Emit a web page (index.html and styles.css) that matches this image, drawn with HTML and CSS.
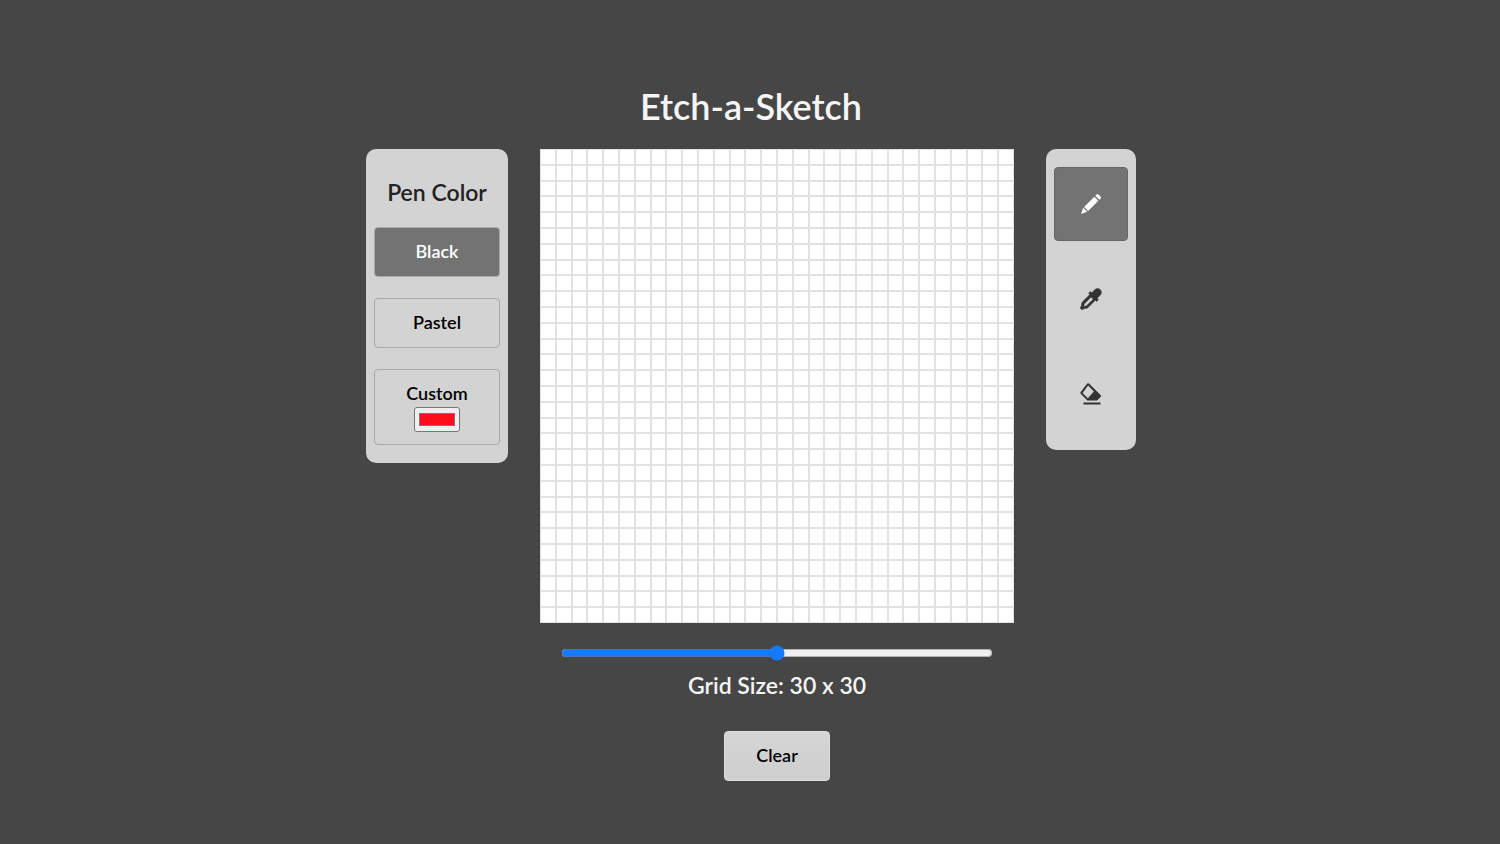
FILE: index.html
```html
<!DOCTYPE html>
<html lang="en">
<head>
<meta charset="utf-8">
<title>Etch-a-Sketch</title>
<link rel="stylesheet" href="styles.css">
</head>
<body>
<h1 class="title">Etch-a-Sketch</h1>
<main class="workspace">
  <section class="panel pens">
    <h2 class="panel-title">Pen Color</h2>
    <button class="pen selected" type="button">Black</button>
    <button class="pen" type="button">Pastel</button>
    <div class="pen custom">
      <label for="pen-color">Custom</label>
      <input class="swatch" id="pen-color" type="color" value="#ff0d1b">
    </div>
  </section>
  <section class="board">
    <div class="grid" id="grid"></div>
    <input class="size" id="size" type="range" min="0" max="60" value="30" aria-labelledby="size-label">
    <label class="size-label" id="size-label" for="size">Grid Size: 30 x 30</label>
    <button class="clear" id="clear" type="button">Clear</button>
  </section>
  <section class="panel tools">
    <button class="tool selected" type="button" aria-label="Pen">
      <svg class="icon" viewBox="0 0 24 24"><path d="M2 22l2.200-6.200 4 4zM5.100 14.900L15.300 4.700l4 4L9.100 18.900zM16.300 3.700l1.300-1.300q.9-.9 1.800 0l2.200 2.200q.9.900 0 1.800l-1.300 1.300z"/></svg>
    </button>
    <button class="tool" type="button" aria-label="Eyedropper">
      <svg class="icon" viewBox="0 0 24 24"><path fill-rule="evenodd" stroke="currentColor" stroke-width=".5" stroke-linejoin="round" d="M21.300 2.700c-1.600-1.600-4.100-1.400-5.600.1l-2.900 2.900-1.400-1.300-1.900 1.900 1.300 1.300-7.200 7.200c-.6.600-.8 1.200-.9 2L2.300 18.900 1.200 21.200l1.600 1.600 2.300-1.100 2-.4c.8-.1 1.400-.3 2-.9l7.200-7.200 1.300 1.300 1.900-1.900-1.300-1.400L21.200 8.300C22.700 6.800 22.900 4.300 21.300 2.700zM7.600 18.700c-.3.300-.7.400-1.200.5l-1.600.3.300-1.700c.1-.5.200-.9.500-1.200l6.500-6.500 2.100 2.100z"/></svg>
    </button>
    <button class="tool" type="button" aria-label="Eraser">
      <svg class="icon" viewBox="0 0 24 24"><path fill-rule="evenodd" d="M8.200 1.600q.9-.9 1.800 0L21.800 13.200q.7.800 0 1.600L18 18.500H8.400L1.700 11.800q-.9-.9 0-1.800zM9.100 3.600L3.600 10.900l5.300 5.300 6-6.800zM4.500 20.600h17v1.900h-17z"/></svg>
    </button>
  </section>
</main>
<script src="script.js"></script>
</body>
</html>
```
FILE: styles.css
```css
* { box-sizing: border-box; }

body {
  margin: 0;
  min-height: 100vh;
  padding: 84px 0 60px 2px;
  background: #464646;
  color: #f5f5f5;
  font-family: Lato, "Open Sans", sans-serif;
  font-weight: 600;
}

button { font: inherit; }

.title {
  margin: 0 0 21px;
  font-size: 36px;
  line-height: 44px;
  font-weight: 600;
  text-align: center;
}

.workspace {
  display: flex;
  justify-content: center;
  align-items: flex-start;
  gap: 32px;
}

.panel {
  display: flex;
  flex-direction: column;
  border-radius: 10px;
  background: #d3d3d3;
}

.pens {
  width: 142px;
  gap: 21px;
  padding: 27px 8px 18px;
}

.panel-title {
  margin: 0 0 -2px;
  font-size: 23px;
  line-height: 32px;
  font-weight: 600;
  text-align: center;
  color: #222;
}

.pen {
  height: 50px;
  border: 1px solid #a9a9a9;
  border-radius: 4px;
  padding: 0 0 3px;
  background: #d3d3d3;
  color: #000;
  font-size: 18px;
  line-height: 24px;
  text-align: center;
}

.selected {
  background: #737373;
  color: #fff;
}

.custom {
  display: flex;
  flex-direction: column;
  align-items: center;
  gap: 2px;
  height: auto;
  padding: 11px 0 12px;
}

.swatch {
  width: 46px;
  height: 25px;
  border: 1px solid #767676;
  border-radius: 3px;
  padding: 1px 2px;
  background: #efefef;
}

.board {
  display: flex;
  flex-direction: column;
  align-items: center;
  width: 474px;
}

.grid {
  display: grid;
  width: 100%;
  aspect-ratio: 1;
  background: #fff;
}

.cell { border: 1px solid #e2e2e2; }

.size {
  width: 432px;
  height: 16px;
  margin: 22px 0 0;
  accent-color: #147bff;
}

.size-label {
  margin: 7px 0 29px;
  font-size: 23px;
  line-height: 34px;
}

.clear {
  width: 106px;
  height: 50px;
  border: 1px solid #dcdcdc;
  border-radius: 4px;
  padding: 0 0 2px;
  background: linear-gradient(#d5d5d5, #cecece);
  color: #000;
  font-size: 18px;
}

.tools {
  width: 90px;
  gap: 21px;
  padding: 18px 8px 19px;
}

.tool {
  display: grid;
  place-items: center;
  width: 74px;
  height: 74px;
  border: 0;
  border-radius: 4px;
  padding: 0;
  background: transparent;
  color: #333;
}

.tool.selected {
  border: 1px solid #666;
  background: #737373;
  color: #fff;
}

.icon {
  width: 24px;
  height: 24px;
  fill: currentColor;
}
```
FILE: script.js
```js
const grid = document.getElementById("grid");
const size = document.getElementById("size");
const label = document.getElementById("size-label");

function build() {
  const n = Math.max(1, Number(size.value));
  grid.style.gridTemplate = `repeat(${n}, 1fr) / repeat(${n}, 1fr)`;
  grid.replaceChildren();
  for (let i = 0; i < n * n; i++) {
    const cell = document.createElement("div");
    cell.className = "cell";
    grid.append(cell);
  }
  label.textContent = `Grid Size: ${n} x ${n}`;
}

size.addEventListener("input", build);
document.getElementById("clear").addEventListener("click", build);
grid.addEventListener("pointerover", (e) => {
  if (e.buttons && e.target.className === "cell") e.target.style.background = "#000";
});
build();
```
